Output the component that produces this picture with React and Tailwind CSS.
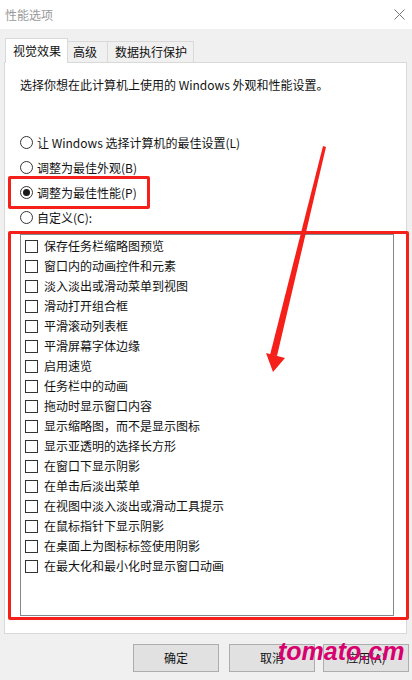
const items = [
  '保存任务栏缩略图预览',
  '窗口内的动画控件和元素',
  '淡入淡出或滑动菜单到视图',
  '滑动打开组合框',
  '平滑滚动列表框',
  '平滑屏幕字体边缘',
  '启用速览',
  '任务栏中的动画',
  '拖动时显示窗口内容',
  '显示缩略图，而不是显示图标',
  '显示亚透明的选择长方形',
  '在窗口下显示阴影',
  '在单击后淡出菜单',
  '在视图中淡入淡出或滑动工具提示',
  '在鼠标指针下显示阴影',
  '在桌面上为图标标签使用阴影',
  '在最大化和最小化时显示窗口动画',
];

const radios = [
  { label: '让 Windows 选择计算机的最佳设置(L)', checked: false },
  { label: '调整为最佳外观(B)', checked: false },
  { label: '调整为最佳性能(P)', checked: true },
  { label: '自定义(C):', checked: false },
];

function Radio({ checked }) {
  return (
    <span className="w-[13px] h-[13px] rounded-full border border-[#333] bg-white flex items-center justify-center shrink-0">
      {checked && <span className="w-[7px] h-[7px] rounded-full bg-[#1a1a1a]" />}
    </span>
  );
}

export default function App() {
  return (
    <div
      className="relative w-[412px] h-[680px] overflow-hidden bg-[#f0f0f0] text-[12px] text-[#111]"
      style={{ fontFamily: '"Noto Sans CJK SC", "Noto Sans", sans-serif' }}
    >
      {/* title bar */}
      <div className="h-[29px] bg-white flex items-center justify-between pl-[5px] pr-[6px]">
        <span className="text-[#9a9a9a] text-[12px]">性能选项</span>
        <svg width="11" height="11" viewBox="0 0 11 11" className="mr-[1px]">
          <path d="M0.5 0.5 L10.5 10.5 M10.5 0.5 L0.5 10.5" stroke="#777" strokeWidth="1" />
        </svg>
      </div>

      {/* tabs */}
      <div className="flex items-end pl-[5px] mt-[9px] h-[24px]">
        <div className="h-[25px] -mb-[1px] relative z-10 bg-white border border-b-0 border-[#d9d9d9] pl-[7px] pr-[6px] flex items-center">
          视觉效果
        </div>
        <div className="h-[21px] border-t border-r border-[#d9d9d9] pl-[5px] pr-[10px] flex items-center">
          高级
        </div>
        <div className="h-[21px] border-t border-r border-[#d9d9d9] pl-[7px] pr-[6px] flex items-center">
          数据执行保护
        </div>
      </div>

      {/* panel */}
      <div className="mx-[4px] mr-[5px] h-[572px] bg-white border border-[#d9d9d9] flex flex-col">
        <div className="pl-[15px] pt-[14px] leading-[16px]">
          选择你想在此计算机上使用的 Windows 外观和性能设置。
        </div>
        <div className="mt-[37px] pl-[15px] flex flex-col">
          {radios.map((r) => (
            <div key={r.label} className="h-[25px] flex items-center gap-[4px]">
              <Radio checked={r.checked} />
              <span>{r.label}</span>
            </div>
          ))}
        </div>
        <div className="mt-[4px] ml-[15px] mr-[12px] h-[382px] border border-[#828790] bg-white flex flex-col pt-[1px]">
          {items.map((t) => (
            <div key={t} className="h-[20px] flex items-center pl-[4px] gap-[6px]">
              <span className="w-[13px] h-[13px] border border-[#333] bg-white shrink-0" />
              <span>{t}</span>
            </div>
          ))}
        </div>
      </div>

      {/* buttons */}
      <div className="flex justify-end gap-[8px] pr-[3px] mt-[10px]">
        <button className="w-[86px] h-[28px] bg-[#e1e1e1] border border-[#adadad] mr-[2px]">确定</button>
        <button className="w-[86px] h-[28px] bg-[#e1e1e1] border border-[#adadad]">取消</button>
        <button className="w-[86px] h-[28px] bg-[#e1e1e1] border border-[#adadad]">应用(A)</button>
      </div>

      {/* annotations */}
      <div className="absolute left-[8px] top-[176px] w-[142px] h-[33px] border-[3px] border-[#f5201a] rounded-[2px]" />
      <div className="absolute left-[8px] top-[231px] w-[401px] h-[389px] border-[3px] border-[#f5201a] rounded-[2px]" />
      <svg className="absolute left-0 top-0" width="412" height="680" viewBox="0 0 412 680">
        <polygon points="323,146 326,147 277,356 270,355" fill="#f5201a" />
        <polygon points="266,353 285,358 273,372" fill="#f5201a" />
      </svg>
      <div
        className="absolute left-[278px] top-[639px] text-[25px] font-bold italic text-[#d8006f] leading-none"
        style={{ fontFamily: '"Liberation Sans", Arial, sans-serif' }}
      >
        tomato.cm
      </div>
    </div>
  );
}
